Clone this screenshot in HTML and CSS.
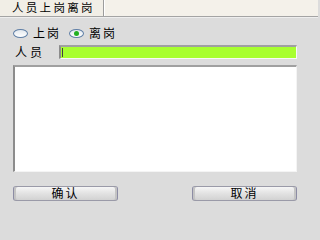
FILE: index.html
```html
<!DOCTYPE html>
<html>
<head>
<meta charset="utf-8">
<link rel="stylesheet" href="styles.css">
</head>
<body>
<div class="tabbar">
  <div class="tab">人员上岗离岗</div>
</div>
<div class="panel">
  <div class="radios">
    <span class="radio"></span><span class="rlabel">上岗</span>
    <span class="radio checked"></span><span class="rlabel">离岗</span>
  </div>
  <div class="field">
    <span class="flabel">人员</span>
    <div class="input"><span class="caret"></span></div>
  </div>
  <div class="textarea"></div>
  <div class="buttons">
    <div class="btn">确认</div>
    <div class="btn">取消</div>
  </div>
</div>
</body>
</html>
```
FILE: styles.css
```css
html, body {
  margin: 0;
  padding: 0;
}
body {
  width: 318px;
  height: 209px;
  overflow: hidden;
  background: #dcdcdc;
  font-family: "Noto Sans CJK SC", "Noto Sans", sans-serif;
  font-size: 12px;
  color: #000;
}
.tabbar {
  height: 16px;
  background: #f4f1ea;
  border-bottom: 1px solid #a4a4a4;
  box-shadow: 0 1px 0 #eeeeee;
  display: flex;
}
.tab {
  width: 91px;
  padding-left: 12px;
  height: 16px;
  line-height: 15px;
  font-size: 11.5px;
  letter-spacing: 2.3px;
  border-right: 1px solid #9c9c9c;
  box-shadow: 1px 0 0 #ffffff;
  background: #f1eee6;
}
.panel {
  padding: 0 21px 0 13px;
  display: flex;
  flex-direction: column;
}
.radios {
  margin-top: 12px;
  height: 8px;
  display: flex;
  align-items: center;
}
.radio {
  width: 13px;
  height: 7px;
  border: 1px solid #5f7fa6;
  border-radius: 50%;
  background: linear-gradient(#e2e8ee, #ffffff);
  margin-right: 5px;
  position: relative;
}
.radio.checked::after {
  content: "";
  position: absolute;
  left: 4px;
  top: 1px;
  width: 5px;
  height: 5px;
  border-radius: 50%;
  background: #22b022;
}
.rlabel {
  letter-spacing: 2px;
  margin-right: 8px;
  line-height: 8px;
}
.field {
  margin-top: 8px;
  height: 14px;
  display: flex;
  align-items: center;
}
.flabel {
  width: 44px;
  padding-left: 2px;
  letter-spacing: 3px;
  line-height: 10px;
}
.input {
  flex: 1;
  height: 11px;
  background: #a8ff30;
  border-top: 2px solid #a0a0a0;
  border-left: 2px solid #8c8c8c;
  border-right: 1px solid #f8f8f8;
  border-bottom: 1px solid #f8f8f8;
  position: relative;
}
.caret {
  position: absolute;
  left: 1px;
  top: 1px;
  width: 1px;
  height: 9px;
  background: #404040;
}
.textarea {
  margin-top: 6px;
  height: 104px;
  background: #ffffff;
  border-top: 2px solid #a0a0a0;
  border-left: 2px solid #8c8c8c;
  border-right: 1px solid #f4f4f4;
  border-bottom: 1px solid #f4f4f4;
}
.buttons {
  margin-top: 14px;
  display: flex;
  justify-content: space-between;
}
.btn {
  width: 103px;
  height: 13px;
  line-height: 12px;
  text-align: center;
  letter-spacing: 2px;
  border: 1px solid #9a9aa8;
  border-left-color: #8c8ca4;
  border-right-color: #8c8ca4;
  border-radius: 3px;
  background: linear-gradient(#f6f6f6 0%, #e4e4e4 45%, #d2d2d2 100%);
  box-shadow: inset 2px 0 0 #c4c4c4, inset -2px 0 0 #c4c4c4;
}
```
